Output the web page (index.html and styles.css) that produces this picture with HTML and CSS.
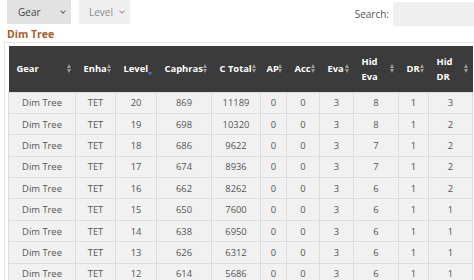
FILE: index.html
```html
<!DOCTYPE html>
<html lang="en">
<head>
	<meta charset="UTF-8">
	<title>Gear</title>
	<link rel="stylesheet" href="styles.css">
</head>
<body>
	<div class="toolbar">
		<div class="filters">
			<div class="select sel-gear">Gear <span class="chev"></span></div>
			<div class="select sel-level">Level <span class="chev"></span></div>
		</div>
		<div class="search">
			<label>Search:</label>
			<div class="search-box"></div>
		</div>
	</div>
	<h3 class="title">Dim Tree</h3>
	<div class="wrap">
		<table class="grid">
			<colgroup>
				<col style="width:67px">
				<col style="width:40px">
				<col style="width:41px">
				<col style="width:55px">
				<col style="width:49px">
				<col style="width:26px">
				<col style="width:33px">
				<col style="width:34px">
				<col style="width:45px">
				<col style="width:30px">
				<col style="width:44px">
			</colgroup>
			<thead>
				<tr>
					<th>Gear<i class="sort"></i></th>
					<th>Enha<i class="sort"></i></th>
					<th>Level<i class="sort desc"></i></th>
					<th>Caphras<i class="sort"></i></th>
					<th>C Total<i class="sort"></i></th>
					<th>AP<i class="sort"></i></th>
					<th>Acc<i class="sort"></i></th>
					<th>Eva<i class="sort"></i></th>
					<th>Hid Eva<i class="sort"></i></th>
					<th>DR<i class="sort"></i></th>
					<th>Hid DR<i class="sort"></i></th>
				</tr>
			</thead>
			<tbody>
				<tr><td>Dim Tree</td><td>TET</td><td>20</td><td>869</td><td>11189</td><td>0</td><td>0</td><td>3</td><td>8</td><td>1</td><td>3</td></tr>
				<tr><td>Dim Tree</td><td>TET</td><td>19</td><td>698</td><td>10320</td><td>0</td><td>0</td><td>3</td><td>8</td><td>1</td><td>2</td></tr>
				<tr><td>Dim Tree</td><td>TET</td><td>18</td><td>686</td><td>9622</td><td>0</td><td>0</td><td>3</td><td>7</td><td>1</td><td>2</td></tr>
				<tr><td>Dim Tree</td><td>TET</td><td>17</td><td>674</td><td>8936</td><td>0</td><td>0</td><td>3</td><td>7</td><td>1</td><td>2</td></tr>
				<tr><td>Dim Tree</td><td>TET</td><td>16</td><td>662</td><td>8262</td><td>0</td><td>0</td><td>3</td><td>6</td><td>1</td><td>2</td></tr>
				<tr><td>Dim Tree</td><td>TET</td><td>15</td><td>650</td><td>7600</td><td>0</td><td>0</td><td>3</td><td>6</td><td>1</td><td>1</td></tr>
				<tr><td>Dim Tree</td><td>TET</td><td>14</td><td>638</td><td>6950</td><td>0</td><td>0</td><td>3</td><td>6</td><td>1</td><td>1</td></tr>
				<tr><td>Dim Tree</td><td>TET</td><td>13</td><td>626</td><td>6312</td><td>0</td><td>0</td><td>3</td><td>6</td><td>1</td><td>1</td></tr>
				<tr><td>Dim Tree</td><td>TET</td><td>12</td><td>614</td><td>5686</td><td>0</td><td>0</td><td>3</td><td>6</td><td>1</td><td>1</td></tr>
			</tbody>
		</table>
	</div>
</body>
</html>
```

FILE: styles.css
```css
*{
	margin: 0;
	padding: 0;
	box-sizing: border-box;
}
body{
	font-family: "Open Sans", "Liberation Sans", sans-serif;
	font-size: 9.4px;
	color: #555;
	background: #fff;
	overflow: hidden;
}
.toolbar{
	display: flex;
	justify-content: space-between;
	align-items: flex-start;
	padding-left: 7px;
	height: 28px;
}
.filters{
	display: flex;
	gap: 8px;
}
.select{
	display: flex;
	align-items: center;
	justify-content: space-between;
	height: 24px;
	padding: 0 6px 0 11px;
	color: #444;
	font-size: 10px;
}
.sel-gear{
	width: 64px;
	background-color: #e2e2e2;
}
.sel-level{
	width: 51px;
	background-color: #efefef;
	color: #8a8a8a;
	padding-left: 10px;
}
.chev{
	width: 4px;
	height: 4px;
	border-right: 1px solid #666;
	border-bottom: 1px solid #666;
	transform: rotate(45deg);
	margin-top: -3px;
}
.sel-level .chev{
	border-color: #999;
}
.search{
	display: flex;
	align-items: center;
	gap: 4px;
	padding-top: 2px;
	color: #555;
	font-size: 10px;
}
.search-box{
	width: 81px;
	height: 24px;
	background-color: #efefef;
}
.title{
	font-size: 10.5px;
	font-weight: 700;
	color: #a95c2a;
	padding-left: 7px;
	height: 14px;
	line-height: 12px;
}
.wrap{
	margin-left: 4px;
	width: 480px;
	padding: 3px;
	border: 1px solid #e4e4e4;
	border-right: none;
}
.grid{
	border-collapse: collapse;
	table-layout: fixed;
	width: 464px;
}
.grid th{
	position: relative;
	background-color: #3b3b3b;
	color: #fff;
	font-weight: 700;
	text-align: left;
	height: 46px;
	padding: 0 8px 0 8px;
	line-height: 15px;
	font-size: 9.4px;
}
.grid th:nth-child(6){
	padding-left: 6px;
}
.grid td{
	height: 21.4px;
	text-align: center;
	background-color: #f1f1f1;
	border: 1px solid #dcdcdc;
	color: #555;
	padding: 0;
}
.sort{
	position: absolute;
	right: 4px;
	top: 50%;
	width: 5px;
	height: 9px;
	margin-top: -5px;
}
.sort:before,
.sort:after{
	content: "";
	position: absolute;
	left: 0;
	border-left: 2.5px solid transparent;
	border-right: 2.5px solid transparent;
}
.sort:before{
	top: 0;
	border-bottom: 4px solid #9a9a9a;
}
.sort:after{
	bottom: 0;
	border-top: 4px solid #9a9a9a;
}
.sort.desc:before{
	display: none;
}
.sort.desc{
	margin-top: -2px;
}
.sort.desc:after{
	border-top-color: #5a6ac0;
}
```
